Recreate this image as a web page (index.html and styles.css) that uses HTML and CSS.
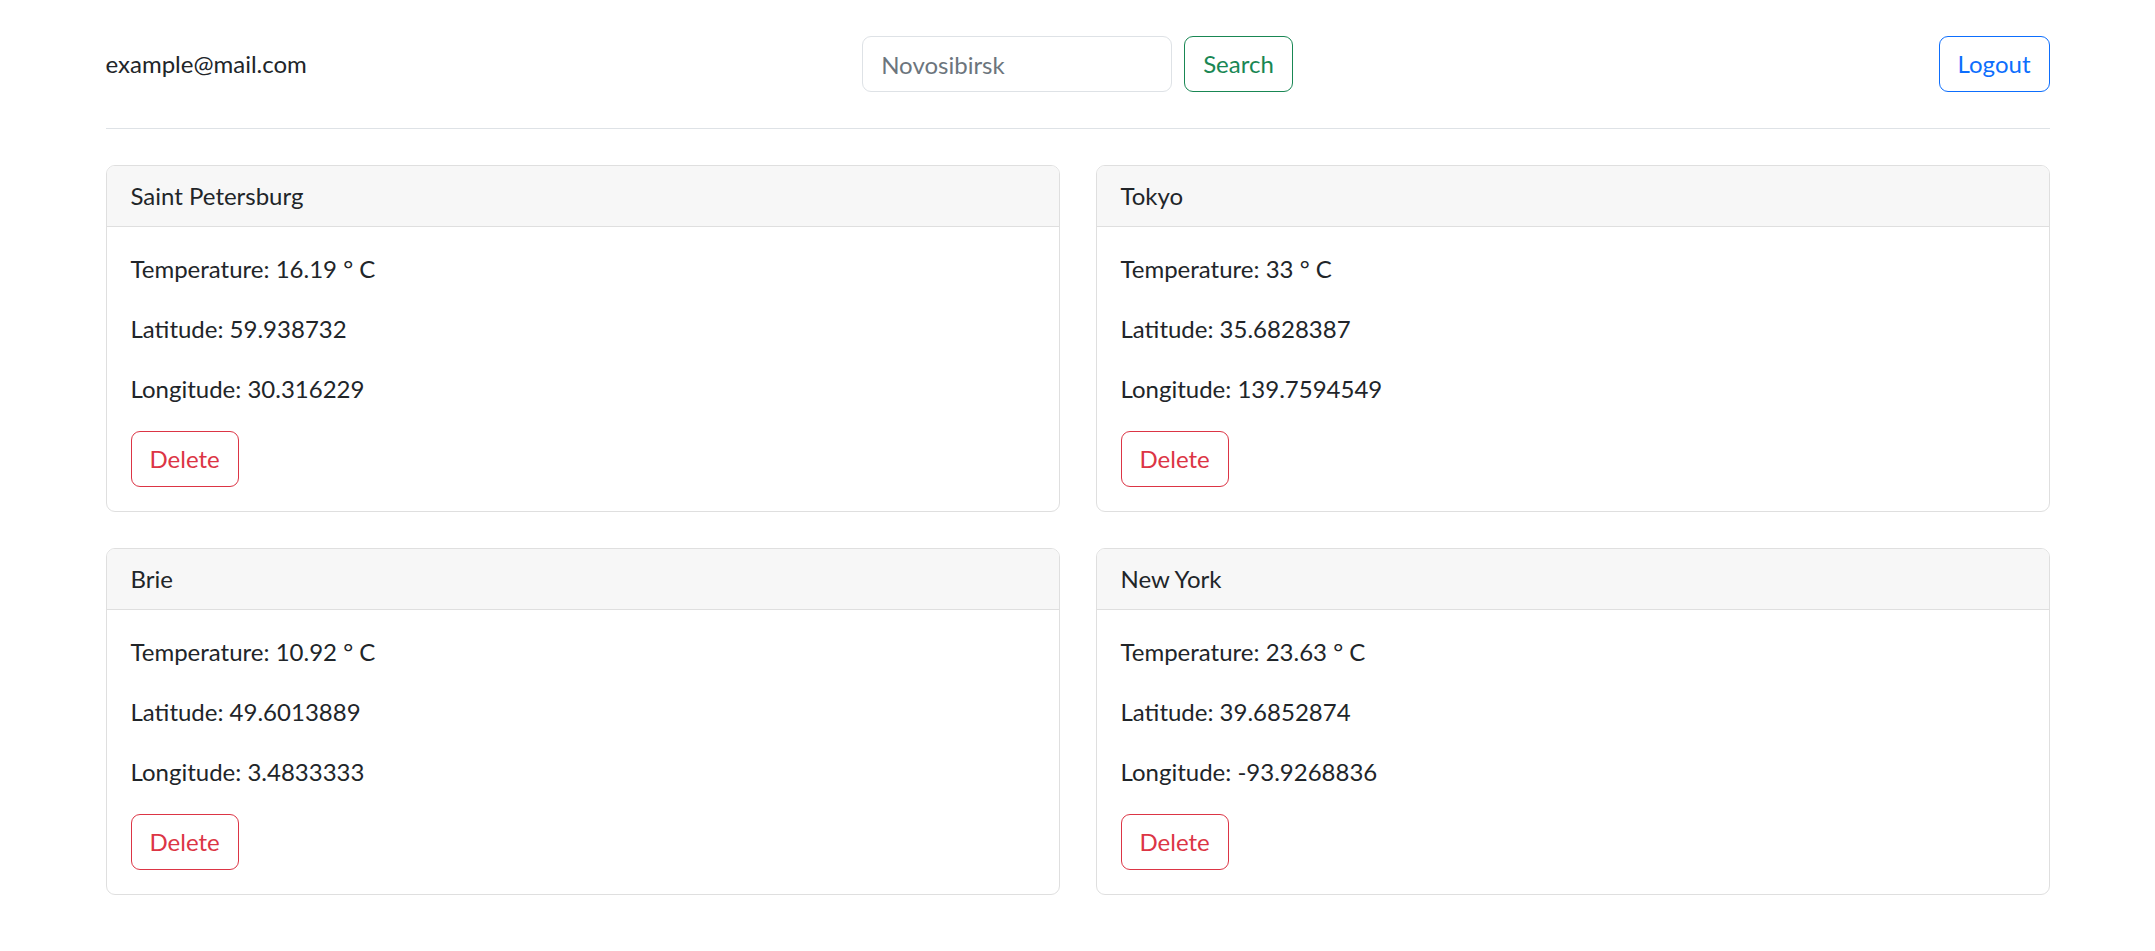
FILE: index.html
```html
<!DOCTYPE html>
<html lang="en">
<head>
<meta charset="utf-8">
<title>Weather</title>
<link rel="stylesheet" href="styles.css">
</head>
<body>
<div class="container">
  <header class="topbar">
    <div class="email">example@mail.com</div>
    <form class="search">
      <input class="input" type="text" placeholder="Novosibirsk">
      <button type="button" class="btn btn-success">Search</button>
    </form>
    <div class="right">
      <button type="button" class="btn btn-primary">Logout</button>
    </div>
  </header>

  <main class="grid">
    <section class="card">
      <div class="card-header">Saint Petersburg</div>
      <div class="card-body">
        <p>Temperature: 16.19 ° C</p>
        <p>Latitude: 59.938732</p>
        <p>Longitude: 30.316229</p>
        <button type="button" class="btn btn-danger">Delete</button>
      </div>
    </section>
    <section class="card">
      <div class="card-header">Tokyo</div>
      <div class="card-body">
        <p>Temperature: 33 ° C</p>
        <p>Latitude: 35.6828387</p>
        <p>Longitude: 139.7594549</p>
        <button type="button" class="btn btn-danger">Delete</button>
      </div>
    </section>
    <section class="card">
      <div class="card-header">Brie</div>
      <div class="card-body">
        <p>Temperature: 10.92 ° C</p>
        <p>Latitude: 49.6013889</p>
        <p>Longitude: 3.4833333</p>
        <button type="button" class="btn btn-danger">Delete</button>
      </div>
    </section>
    <section class="card">
      <div class="card-header">New York</div>
      <div class="card-body">
        <p>Temperature: 23.63 ° C</p>
        <p>Latitude: 39.6852874</p>
        <p>Longitude: -93.9268836</p>
        <button type="button" class="btn btn-danger">Delete</button>
      </div>
    </section>
  </main>
</div>
</body>
</html>
```

FILE: styles.css
```css
* { box-sizing: border-box; }

html, body {
  margin: 0;
  padding: 0;
  background: #fff;
}

body {
  font-family: "Segoe UI", Lato, "Noto Sans", sans-serif;
  font-size: 24px;
  line-height: 36px;
  color: #212529;
}

.container {
  width: 1980px;
  margin: 0 auto;
  padding: 0 18px;
}

.topbar {
  display: grid;
  grid-template-columns: 1fr auto 1fr;
  align-items: center;
  padding: 36px 0;
  border-bottom: 1px solid #dee2e6;
}

.search {
  display: flex;
  gap: 12px;
  margin: 0;
}

.right {
  display: flex;
  justify-content: flex-end;
}

.input {
  width: 310px;
  height: 56px;
  padding: 9px 18px;
  border: 1px solid #dee2e6;
  border-radius: 9px;
  font: inherit;
  color: #212529;
  background: #fff;
  outline: none;
}

.input::placeholder {
  color: #6c757d;
  opacity: 1;
}

.btn {
  height: 56px;
  padding: 9px 18px;
  font: inherit;
  line-height: 36px;
  border-radius: 9px;
  border: 1px solid;
  background: transparent;
  cursor: pointer;
}

.btn-success { color: #198754; border-color: #198754; }
.btn-primary { color: #0d6efd; border-color: #0d6efd; }
.btn-danger { color: #dc3545; border-color: #dc3545; }

.grid {
  display: grid;
  grid-template-columns: 1fr 1fr;
  column-gap: 36px;
  row-gap: 36px;
  padding-top: 36px;
}

.card {
  border: 1px solid #dfdfdf;
  border-radius: 9px;
  overflow: hidden;
}

.card-header {
  padding: 12px 24px;
  background: #f7f7f7;
  border-bottom: 1px solid #dfdfdf;
}

.card-body {
  padding: 24px;
}

.card-body p {
  margin: 0 0 24px;
}
```
